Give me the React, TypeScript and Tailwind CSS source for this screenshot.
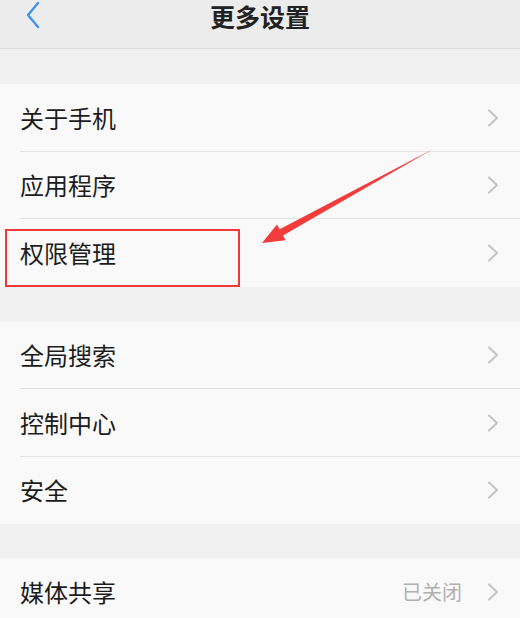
import React from "react";

type Item = { label: string; value?: string };

const groups: Item[][] = [
  [{ label: "关于手机" }, { label: "应用程序" }, { label: "权限管理" }],
  [{ label: "全局搜索" }, { label: "控制中心" }, { label: "安全" }],
  [{ label: "媒体共享", value: "已关闭" }],
];

function Chevron() {
  return (
    <svg width="14" height="18" viewBox="0 0 14 18" fill="none" className="shrink-0">
      <path d="M3 1.5 L11 9 L3 16.5" stroke="#c4c4c4" strokeWidth="2" strokeLinecap="round" strokeLinejoin="round" />
    </svg>
  );
}

function Row({ item, last }: { item: Item; last: boolean }) {
  return (
    <div className="relative flex h-[67.5px] items-center bg-[#f9f9f9] pl-[20px] pr-[20px]">
      <span className="flex-1 text-[24px] leading-none text-[#1c1c1c]">{item.label}</span>
      {item.value && <span className="mr-[24px] text-[20px] leading-none text-[#b0b0b0]">{item.value}</span>}
      <Chevron />
      {!last && <div className="absolute bottom-0 left-[20px] right-0 h-px bg-[#e3e3e3]" />}
    </div>
  );
}

export default function App() {
  return (
    <div
      className="relative h-[618px] w-[520px] overflow-hidden bg-[#f1f1f1]"
      style={{ fontFamily: '"Noto Sans CJK SC", "Noto Sans", sans-serif' }}
    >
      <header className="relative flex h-[49px] items-start justify-center border-b border-[#dcdcdc] bg-[#ececec]">
        <svg width="18" height="28" viewBox="0 0 18 28" fill="none" className="absolute left-[24px] top-[1px]">
          <path d="M14 2 L4 14 L14 26" stroke="#3d93ef" strokeWidth="2.4" strokeLinecap="round" strokeLinejoin="round" />
        </svg>
        <h1 className="mt-[3px] text-[25px] font-bold leading-[26px] text-[#222]">更多设置</h1>
      </header>

      {groups.map((g, gi) => (
        <div key={gi} className={gi === 2 ? "mt-[34px]" : "mt-[35px]"}>
          {g.map((item, i) => (
            <Row key={item.label} item={item} last={i === g.length - 1} />
          ))}
        </div>
      ))}

      {/* annotation */}
      <div className="absolute left-[5px] top-[229px] h-[58px] w-[235px] border-2 border-[#f03a3a]" />
      <svg className="absolute left-0 top-0" width="520" height="618" viewBox="0 0 520 618">
        <polygon
          points="433,149 279.6,229.3 277,224.5 262,243 285.6,240.3 283,235.5"
          fill="#f23b3b"
        />
      </svg>
    </div>
  );
}
